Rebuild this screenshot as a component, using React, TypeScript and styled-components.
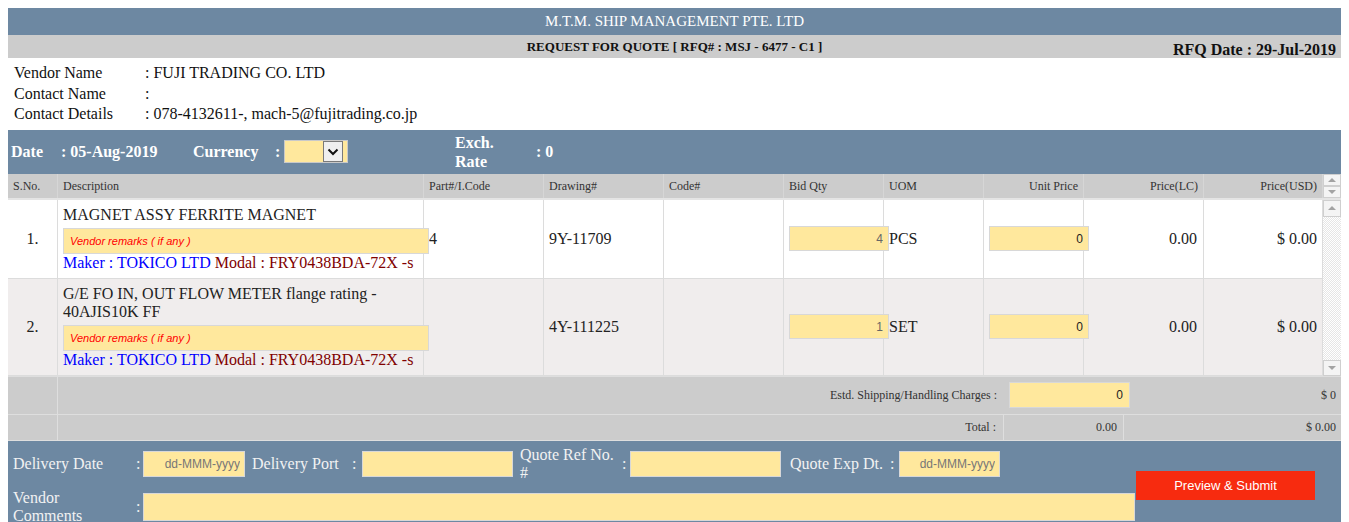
import React from "react";
import styled, { createGlobalStyle } from "styled-components";

const BLUE = "#6d88a2";
const GREY = "#cccccc";
const YELLOW = "#ffe89d";
const CELL_LINE = "#dcdcdc";

const GlobalStyle = createGlobalStyle`
  html, body { padding: 0; background: #fff; }
  body {
    margin: 8px;
    font-family: "Liberation Serif", "Times New Roman", serif;
    color: #222;
    overflow: hidden;
  }
  * { box-sizing: border-box; }
`;

const Page = styled.div`
  width: 1333px;
`;

const TitleBar = styled.div`
  height: 27px;
  background: ${BLUE};
  color: #fff;
  font-size: 15px;
  line-height: 27px;
  text-align: center;
`;

const SubBar = styled.div`
  height: 23px;
  background: ${GREY};
  display: grid;
  grid-template-columns: 1fr auto 1fr;
  align-items: center;
`;

const SubTitle = styled.div`
  grid-column: 2;
  font-size: 13px;
  font-weight: bold;
  color: #111;
`;

const RfqDate = styled.div`
  grid-column: 3;
  justify-self: end;
  align-self: end;
  font-size: 16px;
  font-weight: bold;
  line-height: 17px;
  margin: 0 5px 0 0;
  color: #111;
`;

const VendorBlock = styled.div`
  padding: 5px 6px 5px;
  display: grid;
  grid-template-columns: 131px 1fr;
  font-size: 16px;
  line-height: 20.5px;
  color: #111;
`;

const InfoBar = styled.div`
  height: 44px;
  background: ${BLUE};
  display: flex;
  align-items: center;
  padding-left: 3px;
  color: #fff;
  font-weight: bold;
  font-size: 16px;
`;

const InfoItem = styled.div<{ $w?: number; $mr?: number }>`
  flex: none;
  width: ${(p) => (p.$w ? `${p.$w}px` : "auto")};
  margin-right: ${(p) => p.$mr ?? 0}px;
  line-height: 19px;
`;

const SelectBox = styled.div`
  flex: none;
  width: 64px;
  height: 23px;
  margin-right: 107px;
  background: ${YELLOW};
  border: 1px solid #c9c9c9;
  display: flex;
  justify-content: flex-end;
  align-items: center;
  padding-right: 4px;
`;

const SelectButton = styled.div`
  width: 20px;
  height: 21px;
  background: #efefef;
  border: 1px solid #7a7a7a;
  display: flex;
  align-items: center;
  justify-content: center;
`;

const COLS = "50px 366px 120px 120px 120px 100px 100px 100px 120px 119px";

const HeadWrap = styled.div`
  display: flex;
  background: ${GREY};
  border-bottom: 2px solid #e4e4e4;
`;

const HeadGrid = styled.div`
  width: 1315px;
  display: grid;
  grid-template-columns: ${COLS};
  height: 24px;
`;

const HeadCell = styled.div<{ $right?: boolean }>`
  font-size: 12px;
  color: #333;
  line-height: 24px;
  padding: 0 5px;
  text-align: ${(p) => (p.$right ? "right" : "left")};
  border-right: 1px solid #d6d6d6;
  white-space: nowrap;
`;

const ScrollCol = styled.div`
  width: 18px;
  display: flex;
  flex-direction: column;
  background: #fff;
`;

const ScrollBtn = styled.div<{ $h: number }>`
  height: ${(p) => p.$h}px;
  flex: none;
  background: #f4f4f4;
  border: 1px solid #cfcfcf;
  display: flex;
  align-items: center;
  justify-content: center;
`;

const Track = styled.div`
  flex: 1;
  background-color: #fff;
  background-image: repeating-conic-gradient(#e6e6e6 0% 25%, #ffffff 0% 50%);
  background-size: 2px 2px;
`;

const Arrow = styled.div<{ $down?: boolean }>`
  width: 0;
  height: 0;
  border-left: 4px solid transparent;
  border-right: 4px solid transparent;
  ${(p) =>
    p.$down
      ? "border-top: 4px solid #a3a3a3;"
      : "border-bottom: 4px solid #a3a3a3;"}
`;

const Body = styled.div`
  display: flex;
`;

const Rows = styled.div`
  width: 1315px;
`;

const Row = styled.div<{ $alt?: boolean }>`
  display: grid;
  grid-template-columns: ${COLS};
  background: ${(p) => (p.$alt ? "#f0eded" : "#ffffff")};
`;

const Cell = styled.div<{ $align?: "left" | "center" | "right"; $pr?: number }>`
  display: flex;
  align-items: center;
  justify-content: ${(p) =>
    p.$align === "center" ? "center" : p.$align === "right" ? "flex-end" : "flex-start"};
  padding: 0 ${(p) => p.$pr ?? 5}px 0 5px;
  font-size: 16px;
  color: #222;
  border-right: 1px solid ${CELL_LINE};
  border-bottom: 1px solid ${CELL_LINE};
  white-space: nowrap;
`;

const DescCell = styled.div`
  padding: 6px 5px;
  font-size: 16px;
  line-height: 18px;
  color: #222;
  border-right: 1px solid ${CELL_LINE};
  border-bottom: 1px solid ${CELL_LINE};
  position: relative;
  z-index: 1;
`;

const RemarkInput = styled.input`
  display: block;
  width: 366px;
  height: 26px;
  margin: 4px 0 0;
  padding: 0 6px;
  background: ${YELLOW};
  border: 1px solid #d8d8d8;
  outline: none;
  font-family: "Liberation Sans", Arial, sans-serif;
  font-size: 11px;
  &::placeholder {
    color: #f00;
    font-style: italic;
  }
`;

const MakerLine = styled.div`
  white-space: nowrap;
`;

const Maker = styled.span`
  color: #0000ff;
`;

const Modal = styled.span`
  color: #800000;
`;

const NumCell = styled.div`
  display: flex;
  align-items: center;
  padding: 0 5px;
  border-right: 1px solid ${CELL_LINE};
  border-bottom: 1px solid ${CELL_LINE};
  position: relative;
  z-index: 1;
`;

const NumInput = styled.input<{ $dim?: boolean }>`
  flex: none;
  width: 100px;
  height: 25px;
  padding: 0 5px;
  text-align: right;
  background: ${YELLOW};
  border: 1px solid #d8d8d8;
  outline: none;
  font-family: "Liberation Sans", Arial, sans-serif;
  font-size: 12px;
  color: ${(p) => (p.$dim ? "#666" : "#222")};
`;

const Totals = styled.div`
  background: ${GREY};
  border-top: 1px solid #dedede;
`;

const TotalRow = styled.div<{ $h: number }>`
  display: grid;
  grid-template-columns: 50px 946px 120px 217px;
  height: ${(p) => p.$h}px;
  border-bottom: 1px solid #dedede;
`;

const TotalCell = styled.div<{ $pr?: number; $line?: boolean }>`
  display: flex;
  align-items: center;
  justify-content: flex-end;
  padding: 0 ${(p) => p.$pr ?? 5}px 0 5px;
  font-size: 12px;
  color: #333;
  border-right: ${(p) => (p.$line ? "1px solid #dedede" : "none")};
  white-space: nowrap;
`;

const ChargeCell = styled.div`
  display: flex;
  align-items: center;
  padding-left: 5px;
  position: relative;
  z-index: 1;
`;

const ChargeInput = styled.input`
  flex: none;
  width: 121px;
  height: 26px;
  padding: 0 6px;
  text-align: right;
  background: ${YELLOW};
  border: 1px solid #d8d8d8;
  outline: none;
  font-family: "Liberation Sans", Arial, sans-serif;
  font-size: 12px;
  color: #222;
`;

const Bottom = styled.div`
  height: 82px;
  background: ${BLUE};
  display: flex;
  color: #f2f2f2;
  font-size: 16px;
  overflow: hidden;
`;

const BottomFields = styled.div`
  width: 1128px;
  flex: none;
  padding: 5px 0 0 5px;
`;

const FieldRow = styled.div<{ $mt?: number }>`
  display: flex;
  align-items: center;
  margin-top: ${(p) => p.$mt ?? 0}px;
`;

const FLabel = styled.div<{ $w: number; $ml?: number }>`
  flex: none;
  width: ${(p) => p.$w}px;
  margin-left: ${(p) => p.$ml ?? 0}px;
  line-height: 18px;
`;

const FColon = styled.div<{ $w: number }>`
  flex: none;
  width: ${(p) => p.$w}px;
`;

const FInput = styled.input<{ $w: number; $h?: number }>`
  flex: none;
  width: ${(p) => p.$w}px;
  height: ${(p) => p.$h ?? 26}px;
  padding: 0 4px;
  text-align: right;
  background: ${YELLOW};
  border: 1px solid #d8d8d8;
  outline: none;
  font-family: "Liberation Sans", Arial, sans-serif;
  font-size: 12px;
  color: #333;
  &::placeholder {
    color: #777;
  }
`;

const ButtonCol = styled.div`
  padding-top: 30px;
`;

const SubmitButton = styled.button`
  width: 179px;
  height: 29px;
  background: #f72b0f;
  color: #fff;
  border: none;
  font-family: "Liberation Sans", Arial, sans-serif;
  font-size: 13px;
  cursor: pointer;
`;

const Chevron = () => (
  <svg width="12" height="8" viewBox="0 0 12 8">
    <path d="M1.5 1.5 L6 6 L10.5 1.5" fill="none" stroke="#111" strokeWidth="2" />
  </svg>
);

type Item = {
  no: string;
  desc: string;
  part: string;
  drawing: string;
  qty: string;
  uom: string;
};

const items: Item[] = [
  { no: "1.", desc: "MAGNET ASSY FERRITE MAGNET", part: "4", drawing: "9Y-11709", qty: "4", uom: "PCS" },
  {
    no: "2.",
    desc: "G/E FO IN, OUT FLOW METER flange rating - 40AJIS10K FF",
    part: "",
    drawing: "4Y-111225",
    qty: "1",
    uom: "SET",
  },
];

export default function App() {
  return (
    <Page>
      <GlobalStyle />
      <TitleBar>M.T.M. SHIP MANAGEMENT PTE. LTD</TitleBar>
      <SubBar>
        <SubTitle>REQUEST FOR QUOTE [ RFQ# : MSJ - 6477 - C1 ]</SubTitle>
        <RfqDate>RFQ Date : 29-Jul-2019</RfqDate>
      </SubBar>
      <VendorBlock>
        <div>Vendor Name</div>
        <div>: FUJI TRADING CO. LTD</div>
        <div>Contact Name</div>
        <div>:</div>
        <div>Contact Details</div>
        <div>: 078-4132611-, mach-5@fujitrading.co.jp</div>
      </VendorBlock>
      <InfoBar>
        <InfoItem $w={50}>Date</InfoItem>
        <InfoItem $w={132}>: 05-Aug-2019</InfoItem>
        <InfoItem $w={82}>Currency</InfoItem>
        <InfoItem $w={9}>:</InfoItem>
        <SelectBox>
          <SelectButton>
            <Chevron />
          </SelectButton>
        </SelectBox>
        <InfoItem $w={81}>
          Exch.
          <br />
          Rate
        </InfoItem>
        <InfoItem>: 0</InfoItem>
      </InfoBar>
      <HeadWrap>
        <HeadGrid>
          <HeadCell>S.No.</HeadCell>
          <HeadCell>Description</HeadCell>
          <HeadCell>Part#/I.Code</HeadCell>
          <HeadCell>Drawing#</HeadCell>
          <HeadCell>Code#</HeadCell>
          <HeadCell>Bid Qty</HeadCell>
          <HeadCell>UOM</HeadCell>
          <HeadCell $right>Unit Price</HeadCell>
          <HeadCell $right>Price(LC)</HeadCell>
          <HeadCell $right>Price(USD)</HeadCell>
        </HeadGrid>
        <ScrollCol>
          <ScrollBtn $h={12}>
            <Arrow />
          </ScrollBtn>
          <ScrollBtn $h={12}>
            <Arrow $down />
          </ScrollBtn>
        </ScrollCol>
      </HeadWrap>
      <Body>
        <Rows>
          {items.map((it, i) => (
            <Row key={it.no} $alt={i % 2 === 1}>
              <Cell $align="center">{it.no}</Cell>
              <DescCell>
                <div>{it.desc}</div>
                <RemarkInput placeholder="Vendor remarks ( if any )" />
                <MakerLine>
                  <Maker>Maker : TOKICO LTD</Maker> <Modal>Modal : FRY0438BDA-72X -s</Modal>
                </MakerLine>
              </DescCell>
              <Cell>{it.part}</Cell>
              <Cell>{it.drawing}</Cell>
              <Cell />
              <NumCell>
                <NumInput $dim defaultValue={it.qty} />
              </NumCell>
              <Cell>{it.uom}</Cell>
              <NumCell>
                <NumInput defaultValue="0" />
              </NumCell>
              <Cell $align="right" $pr={6}>
                0.00
              </Cell>
              <Cell $align="right">$ 0.00</Cell>
            </Row>
          ))}
        </Rows>
        <ScrollCol>
          <ScrollBtn $h={17}>
            <Arrow />
          </ScrollBtn>
          <Track />
          <ScrollBtn $h={16}>
            <Arrow $down />
          </ScrollBtn>
        </ScrollCol>
      </Body>
      <Totals>
        <TotalRow $h={38}>
          <TotalCell $line />
          <TotalCell $pr={7}>Estd. Shipping/Handling Charges :</TotalCell>
          <ChargeCell>
            <ChargeInput defaultValue="0" />
          </ChargeCell>
          <TotalCell>$ 0</TotalCell>
        </TotalRow>
        <TotalRow $h={26}>
          <TotalCell $line />
          <TotalCell $pr={7} $line>
            Total :
          </TotalCell>
          <TotalCell $pr={6} $line>
            0.00
          </TotalCell>
          <TotalCell>$ 0.00</TotalCell>
        </TotalRow>
      </Totals>
      <Bottom>
        <BottomFields>
          <FieldRow>
            <FLabel $w={123}>Delivery Date</FLabel>
            <FColon $w={7}>:</FColon>
            <FInput $w={102} placeholder="dd-MMM-yyyy" />
            <FLabel $w={100} $ml={7}>
              Delivery Port
            </FLabel>
            <FColon $w={10}>:</FColon>
            <FInput $w={151} />
            <FLabel $w={102} $ml={7}>
              Quote Ref No.
              <br />#
            </FLabel>
            <FColon $w={8}>:</FColon>
            <FInput $w={151} />
            <FLabel $w={100} $ml={9}>
              Quote Exp Dt.
            </FLabel>
            <FColon $w={9}>:</FColon>
            <FInput $w={101} placeholder="dd-MMM-yyyy" />
          </FieldRow>
          <FieldRow $mt={7}>
            <FLabel $w={123}>
              Vendor
              <br />
              Comments
            </FLabel>
            <FColon $w={7}>:</FColon>
            <FInput $w={992} $h={28} />
          </FieldRow>
        </BottomFields>
        <ButtonCol>
          <SubmitButton>Preview &amp; Submit</SubmitButton>
        </ButtonCol>
      </Bottom>
    </Page>
  );
}
